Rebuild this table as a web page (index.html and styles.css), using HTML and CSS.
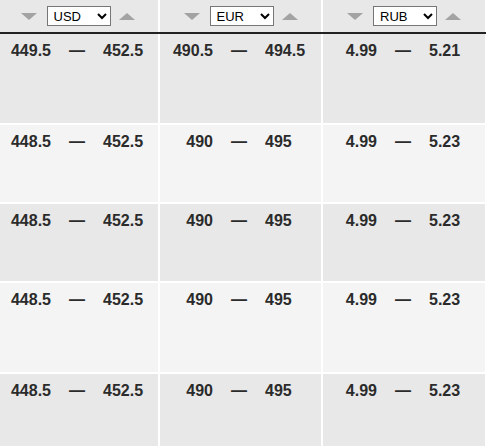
FILE: index.html
```html
<!DOCTYPE html>
<html>
<head>
<meta charset="utf-8">
<link rel="stylesheet" href="styles.css">
</head>
<body>
<div class="table">
  <div class="head">
    <div class="hcell">
      <span class="tri down"></span>
      <select class="cur"><option>USD</option></select>
      <span class="tri up"></span>
    </div>
    <div class="hcell">
      <span class="tri down"></span>
      <select class="cur"><option>EUR</option></select>
      <span class="tri up"></span>
    </div>
    <div class="hcell">
      <span class="tri down"></span>
      <select class="cur"><option>RUB</option></select>
      <span class="tri up"></span>
    </div>
    <div class="hcell"></div>
  </div>

  <div class="row odd tall">
    <div class="cell"><span class="lo">449.5</span><span class="dash">—</span><span class="hi">452.5</span></div>
    <div class="cell"><span class="lo">490.5</span><span class="dash">—</span><span class="hi">494.5</span></div>
    <div class="cell"><span class="lo">4.99</span><span class="dash">—</span><span class="hi">5.21</span></div>
    <div class="cell"></div>
  </div>
  <div class="row even short">
    <div class="cell"><span class="lo">448.5</span><span class="dash">—</span><span class="hi">452.5</span></div>
    <div class="cell"><span class="lo">490</span><span class="dash">—</span><span class="hi">495</span></div>
    <div class="cell"><span class="lo">4.99</span><span class="dash">—</span><span class="hi">5.23</span></div>
    <div class="cell"></div>
  </div>
  <div class="row odd short">
    <div class="cell"><span class="lo">448.5</span><span class="dash">—</span><span class="hi">452.5</span></div>
    <div class="cell"><span class="lo">490</span><span class="dash">—</span><span class="hi">495</span></div>
    <div class="cell"><span class="lo">4.99</span><span class="dash">—</span><span class="hi">5.23</span></div>
    <div class="cell"></div>
  </div>
  <div class="row even tall">
    <div class="cell"><span class="lo">448.5</span><span class="dash">—</span><span class="hi">452.5</span></div>
    <div class="cell"><span class="lo">490</span><span class="dash">—</span><span class="hi">495</span></div>
    <div class="cell"><span class="lo">4.99</span><span class="dash">—</span><span class="hi">5.23</span></div>
    <div class="cell"></div>
  </div>
  <div class="row odd tall">
    <div class="cell"><span class="lo">448.5</span><span class="dash">—</span><span class="hi">452.5</span></div>
    <div class="cell"><span class="lo">490</span><span class="dash">—</span><span class="hi">495</span></div>
    <div class="cell"><span class="lo">4.99</span><span class="dash">—</span><span class="hi">5.23</span></div>
    <div class="cell"></div>
  </div>
</div>
</body>
</html>
```

FILE: styles.css
```css
html, body {
  margin: 0;
  padding: 0;
  overflow: hidden;
  background: #ffffff;
}

body {
  font-family: "Liberation Sans", Arial, sans-serif;
  color: #2b2b2b;
}

.table {
  display: flex;
  flex-direction: column;
  row-gap: 2px;
  width: 700px;
}

.head,
.row {
  display: grid;
  grid-template-columns: 158px 161px 162px 200px;
  column-gap: 2px;
}

.head {
  border-bottom: 2px solid #222222;
  margin-bottom: -2px;
}

.hcell {
  height: 32px;
  background: #e8e8e8;
  display: flex;
  align-items: center;
  justify-content: center;
}

.hcell:first-child {
  padding-right: 3px;
}

.tri {
  width: 0;
  height: 0;
  border-left: 8px solid transparent;
  border-right: 8px solid transparent;
  margin-top: 1px;
}

.tri.down {
  border-top: 7px solid #a3a3a3;
  margin-right: 10px;
}

.tri.up {
  border-bottom: 7px solid #a3a3a3;
  margin-left: 8px;
}

.cur {
  width: 64px;
  height: 20px;
  margin: 0;
  padding: 0 0 0 2px;
  font-family: "Liberation Sans", Arial, sans-serif;
  font-size: 13px;
  color: #000000;
  background: #ffffff;
  border: 1px solid #767676;
  border-radius: 0;
}

.row.tall { height: 89px; }
.row.short { height: 77px; }

.row.odd .cell { background: #e8e8e8; }
.row.even .cell { background: #f4f4f4; }

.cell {
  display: flex;
  align-items: flex-start;
  padding-top: 8px;
  font-size: 16px;
  font-weight: bold;
  line-height: 18px;
}

.cell:nth-child(2) { padding-left: 2px; }
.cell:nth-child(3) { padding-left: 3px; }

.lo {
  width: 51px;
  text-align: right;
}

.dash {
  margin: 0 18px;
}
```
